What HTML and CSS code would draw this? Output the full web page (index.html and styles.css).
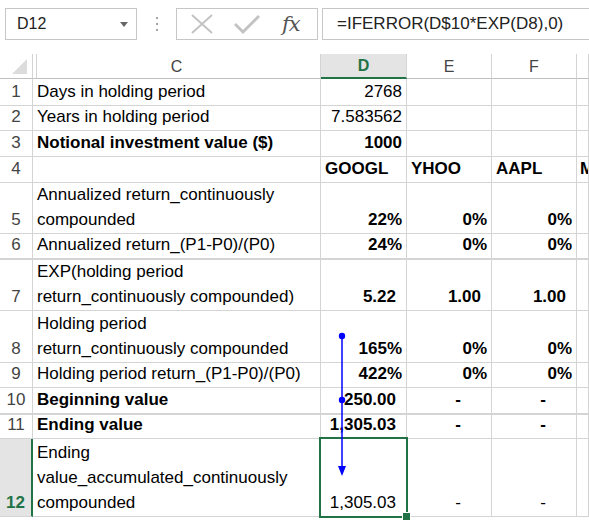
FILE: index.html
```html
<!DOCTYPE html>
<html lang="en">
    <head>
        <meta charset="UTF-8" />
        <meta name="viewport" content="width=device-width, initial-scale=1.0" />
        <title>Holding period returns</title>
        <link rel="stylesheet" href="styles.css">
    </head>
    <body>
        <!-- formula bar -->
        <div class="toolbar">
            <div class="namebox">D12<span class="caret"></span></div>
            <div class="grip"><i></i><i></i><i></i></div>
            <div class="fbuttons">
                <svg class="ico" width="24" height="22" viewBox="0 0 24 22">
                    <path d="M2 2 L22 20 M22 2 L2 20" stroke="#c3c3c3" stroke-width="2" fill="none" />
                </svg>
                <svg class="ico" width="26" height="22" viewBox="0 0 26 22">
                    <path d="M1 11 L9 19 L25 3" stroke="#c3c3c3" stroke-width="3" fill="none" />
                </svg>
                <span class="fx">fx</span>
            </div>
            <div class="formula">=IFERROR(D$10*EXP(D8),0)</div>
        </div>

        <!-- sheet -->
        <div class="sheet">
            <div class="corner"><span class="tri"></span></div>
            <div class="colhead first">C</div>
            <div class="colhead sel">D</div>
            <div class="colhead">E</div>
            <div class="colhead">F</div>
            <div class="colhead"></div>

            <div class="rh">1</div>
            <div class="cell">Days in holding period</div>
            <div class="cell num">2768</div>
            <div class="cell"></div><div class="cell"></div><div class="cell"></div>

            <div class="rh">2</div>
            <div class="cell">Years in holding period</div>
            <div class="cell num">7.583562</div>
            <div class="cell"></div><div class="cell"></div><div class="cell"></div>

            <div class="rh">3</div>
            <div class="cell bold">Notional investment value ($)</div>
            <div class="cell num bold">1000</div>
            <div class="cell"></div><div class="cell"></div><div class="cell"></div>

            <div class="rh">4</div>
            <div class="cell"></div>
            <div class="cell bold">GOOGL</div>
            <div class="cell bold">YHOO</div>
            <div class="cell bold">AAPL</div>
            <div class="cell bold clip">M</div>

            <div class="rh">5</div>
            <div class="cell">Annualized return_continuously<br>compounded</div>
            <div class="cell num bold">22%</div>
            <div class="cell num bold">0%</div>
            <div class="cell num bold">0%</div>
            <div class="cell"></div>

            <div class="rh thick">6</div>
            <div class="cell thick">Annualized return_(P1-P0)/(P0)</div>
            <div class="cell num bold thick">24%</div>
            <div class="cell num bold thick">0%</div>
            <div class="cell num bold thick">0%</div>
            <div class="cell thick"></div>

            <div class="rh">7</div>
            <div class="cell">EXP(holding period<br>return_continuously compounded)</div>
            <div class="cell num bold acc">5.22</div>
            <div class="cell num bold acc">1.00</div>
            <div class="cell num bold acc">1.00</div>
            <div class="cell"></div>

            <div class="rh">8</div>
            <div class="cell">Holding period<br>return_continuously compounded</div>
            <div class="cell num bold">165%</div>
            <div class="cell num bold">0%</div>
            <div class="cell num bold">0%</div>
            <div class="cell"></div>

            <div class="rh">9</div>
            <div class="cell">Holding period return_(P1-P0)/(P0)</div>
            <div class="cell num bold">422%</div>
            <div class="cell num bold">0%</div>
            <div class="cell num bold">0%</div>
            <div class="cell"></div>

            <div class="rh thick">10</div>
            <div class="cell bold thick">Beginning value</div>
            <div class="cell num bold acc thick">250.00</div>
            <div class="cell num bold dash thick">-</div>
            <div class="cell num bold dash thick">-</div>
            <div class="cell thick"></div>

            <div class="rh">11</div>
            <div class="cell bold">Ending value</div>
            <div class="cell num bold acc">1,305.03</div>
            <div class="cell num bold dash">-</div>
            <div class="cell num bold dash">-</div>
            <div class="cell"></div>

            <div class="rh sel">12</div>
            <div class="cell">Ending<br>value_accumulated_continuously<br>compounded</div>
            <div class="cell num acc active">1,305.03</div>
            <div class="cell num dash">-</div>
            <div class="cell num dash">-</div>
            <div class="cell"></div>

            <!-- trace precedents arrow -->
            <svg class="trace" width="14" height="150" viewBox="0 0 14 150">
                <circle cx="7" cy="4" r="3.2" fill="#0000ff" />
                <circle cx="7" cy="68" r="3.2" fill="#0000ff" />
                <line x1="7" y1="4" x2="7" y2="136" stroke="#0000ff" stroke-width="1.5" />
                <path d="M3 134 L11 134 L7 144 Z" fill="#0000ff" />
            </svg>
        </div>
    </body>
</html>
```

FILE: styles.css
```css
* {
    margin: 0;
    padding: 0;
    box-sizing: border-box;
}
body {
    font-family: "Liberation Sans", Arial, sans-serif;
    font-size: 17px;
    color: #000;
    background-color: #fff;
    width: 589px;
    height: 522px;
    overflow: hidden;
}
.toolbar {
    display: flex;
    align-items: flex-start;
    height: 54px;
    padding-top: 8px;
    padding-left: 5px;
}
.namebox {
    position: relative;
    width: 132px;
    height: 32px;
    border: 1px solid #c6c6c6;
    padding-left: 11px;
    line-height: 30px;
    font-size: 16px;
    color: #222;
}
.caret {
    position: absolute;
    right: 8px;
    top: 13px;
    border-left: 4px solid transparent;
    border-right: 4px solid transparent;
    border-top: 5px solid #666;
}
.grip {
    width: 39px;
    height: 32px;
    display: flex;
    flex-direction: column;
    align-items: center;
    justify-content: center;
    gap: 4px;
}
.grip i {
    width: 2px;
    height: 2px;
    background-color: #a6a6a6;
}
.fbuttons {
    width: 142px;
    height: 32px;
    border: 1px solid #c6c6c6;
    display: flex;
    align-items: center;
    padding-left: 13px;
    gap: 20px;
}
.fx {
    font-family: "DejaVu Serif", "Liberation Serif", serif;
    font-style: italic;
    font-size: 21px;
    color: #555;
    margin-left: 2px;
    letter-spacing: -1px;
}
.formula {
    flex: 1;
    height: 32px;
    margin-left: 4px;
    margin-right: -2px;
    border: 1px solid #c6c6c6;
    padding-left: 14px;
    line-height: 30px;
    font-size: 17px;
    color: #222;
}

.sheet {
    position: relative;
    display: grid;
    grid-template-columns: 33px 288px 86px 85px 85px 12px;
    grid-template-rows: 25px 27px 25px 26px 26px 51px 26px 51px 52px 25px 27px 24px 78px 10px;
    line-height: 25px;
}
.sheet > div {
    border-right: 1px solid #d4d4d4;
    border-bottom: 1px solid #d4d4d4;
    display: flex;
    align-items: flex-end;
    white-space: nowrap;
    overflow: hidden;
}
.corner {
    position: relative;
}
.corner .tri {
    position: absolute;
    right: 5px;
    bottom: 4px;
    border-left: 15px solid transparent;
    border-bottom: 15px solid #dcdcdc;
}
.sheet > .corner,
.sheet > .colhead {
    border-bottom-color: #bfbfbf;
}
.sheet > .colhead {
    justify-content: center;
    align-items: center;
    color: #444;
    font-size: 16px;
}
.sheet > .colhead.first {
    box-shadow: inset 3px 0 0 #fff, inset 4px 0 0 #d4d4d4;
}
.sheet > .colhead.sel {
    background-color: #e4e4e4;
    border-bottom: 2px solid #217346;
    color: #217346;
    font-weight: bold;
}
.sheet > .rh {
    justify-content: center;
    color: #444;
    padding-bottom: 1px;
}
.sheet > .rh.sel {
    background-color: #e4e4e4;
    border-right: 2px solid #217346;
    color: #217346;
    font-weight: bold;
}
.cell {
    padding-left: 4px;
    padding-right: 4px;
    padding-bottom: 1px;
}
.sheet > .thick {
    border-bottom-width: 2px;
}
.bold {
    font-weight: bold;
}
.num {
    justify-content: flex-end;
}
.acc {
    padding-right: 10px;
}
.dash {
    padding-right: 30px;
}
.clip {
    padding-left: 3px;
}
.active {
    position: relative;
    overflow: visible !important;
}
.active::after {
    content: "";
    position: absolute;
    left: -2px;
    top: -2px;
    right: -2px;
    bottom: -2px;
    border: 2px solid #217346;
}
.active::before {
    content: "";
    position: absolute;
    right: -5px;
    bottom: -5px;
    width: 7px;
    height: 7px;
    background-color: #217346;
    border: 1px solid #fff;
    z-index: 1;
}
.trace {
    position: absolute;
    left: 335px;
    top: 278px;
}
```
